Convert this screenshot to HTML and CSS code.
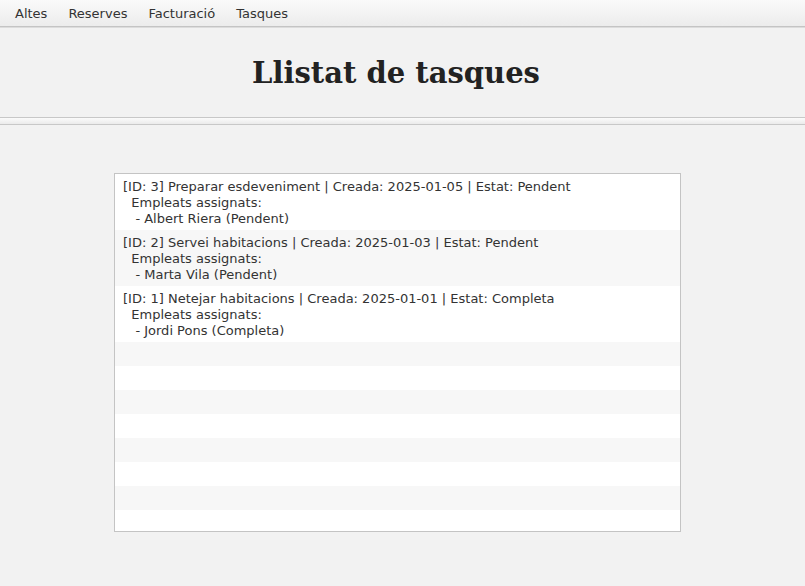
FILE: index.html
```html
<!DOCTYPE html>
<html>
<head>
<meta charset="utf-8">
<link rel="stylesheet" href="styles.css">
</head>
<body>
<nav class="menubar">
  <span class="menu">Altes</span>
  <span class="menu">Reserves</span>
  <span class="menu">Facturació</span>
  <span class="menu">Tasques</span>
</nav>
<header class="header">
  <h1 class="title">Llistat de tasques</h1>
</header>
<div class="separator"></div>
<main class="content">
  <div class="list">
    <div class="row">[ID: 3] Preparar esdeveniment | Creada: 2025-01-05 | Estat: Pendent
  Empleats assignats:
   - Albert Riera (Pendent)</div>
    <div class="row alt">[ID: 2] Servei habitacions | Creada: 2025-01-03 | Estat: Pendent
  Empleats assignats:
   - Marta Vila (Pendent)</div>
    <div class="row">[ID: 1] Netejar habitacions | Creada: 2025-01-01 | Estat: Completa
  Empleats assignats:
   - Jordi Pons (Completa)</div>
    <div class="empty alt"></div>
    <div class="empty"></div>
    <div class="empty alt"></div>
    <div class="empty"></div>
    <div class="empty alt"></div>
    <div class="empty"></div>
    <div class="empty alt"></div>
    <div class="empty"></div>
  </div>
</main>
</body>
</html>
```
FILE: styles.css
```css
html, body {
  margin: 0;
  padding: 0;
}
body {
  background: #f2f2f2;
  font-family: "DejaVu Sans", sans-serif;
  color: #333;
  width: 805px;
  height: 586px;
  overflow: hidden;
}
.menubar {
  height: 27px;
  box-sizing: border-box;
  display: flex;
  align-items: center;
  padding-left: 7px;
  padding-top: 1px;
  background: linear-gradient(#fafafa, #ececec);
  border-bottom: 1px solid #c4c4c4;
  box-shadow: 0 1px 0 #dcdcdc;
  font-size: 13px;
}
.menu {
  padding: 0 8px;
  margin-right: 5px;
}
.header {
  height: 90px;
  display: flex;
  align-items: center;
  justify-content: center;
  box-sizing: border-box;
}
.title {
  margin: 0;
  font-family: "DejaVu Serif", serif;
  font-weight: bold;
  font-size: 29px;
  color: #222;
  padding-top: 2px;
  padding-right: 13px;
}
.separator {
  height: 8px;
  box-sizing: border-box;
  border-top: 1px solid #c8c8c8;
  border-bottom: 1px solid #c8c8c8;
  background: linear-gradient(#fbfbfb, #ebebeb);
}
.content {
  padding: 48px 0 0 114px;
}
.list {
  width: 567px;
  height: 359px;
  box-sizing: border-box;
  border: 1px solid #c4c4c4;
  background: #fff;
  overflow: hidden;
}
.row {
  white-space: pre;
  font-size: 13px;
  line-height: 16px;
  padding: 5px 8px 3px;
  height: 56px;
  box-sizing: border-box;
}
.empty {
  height: 24px;
}
.alt {
  background: #f7f7f7;
}
```
